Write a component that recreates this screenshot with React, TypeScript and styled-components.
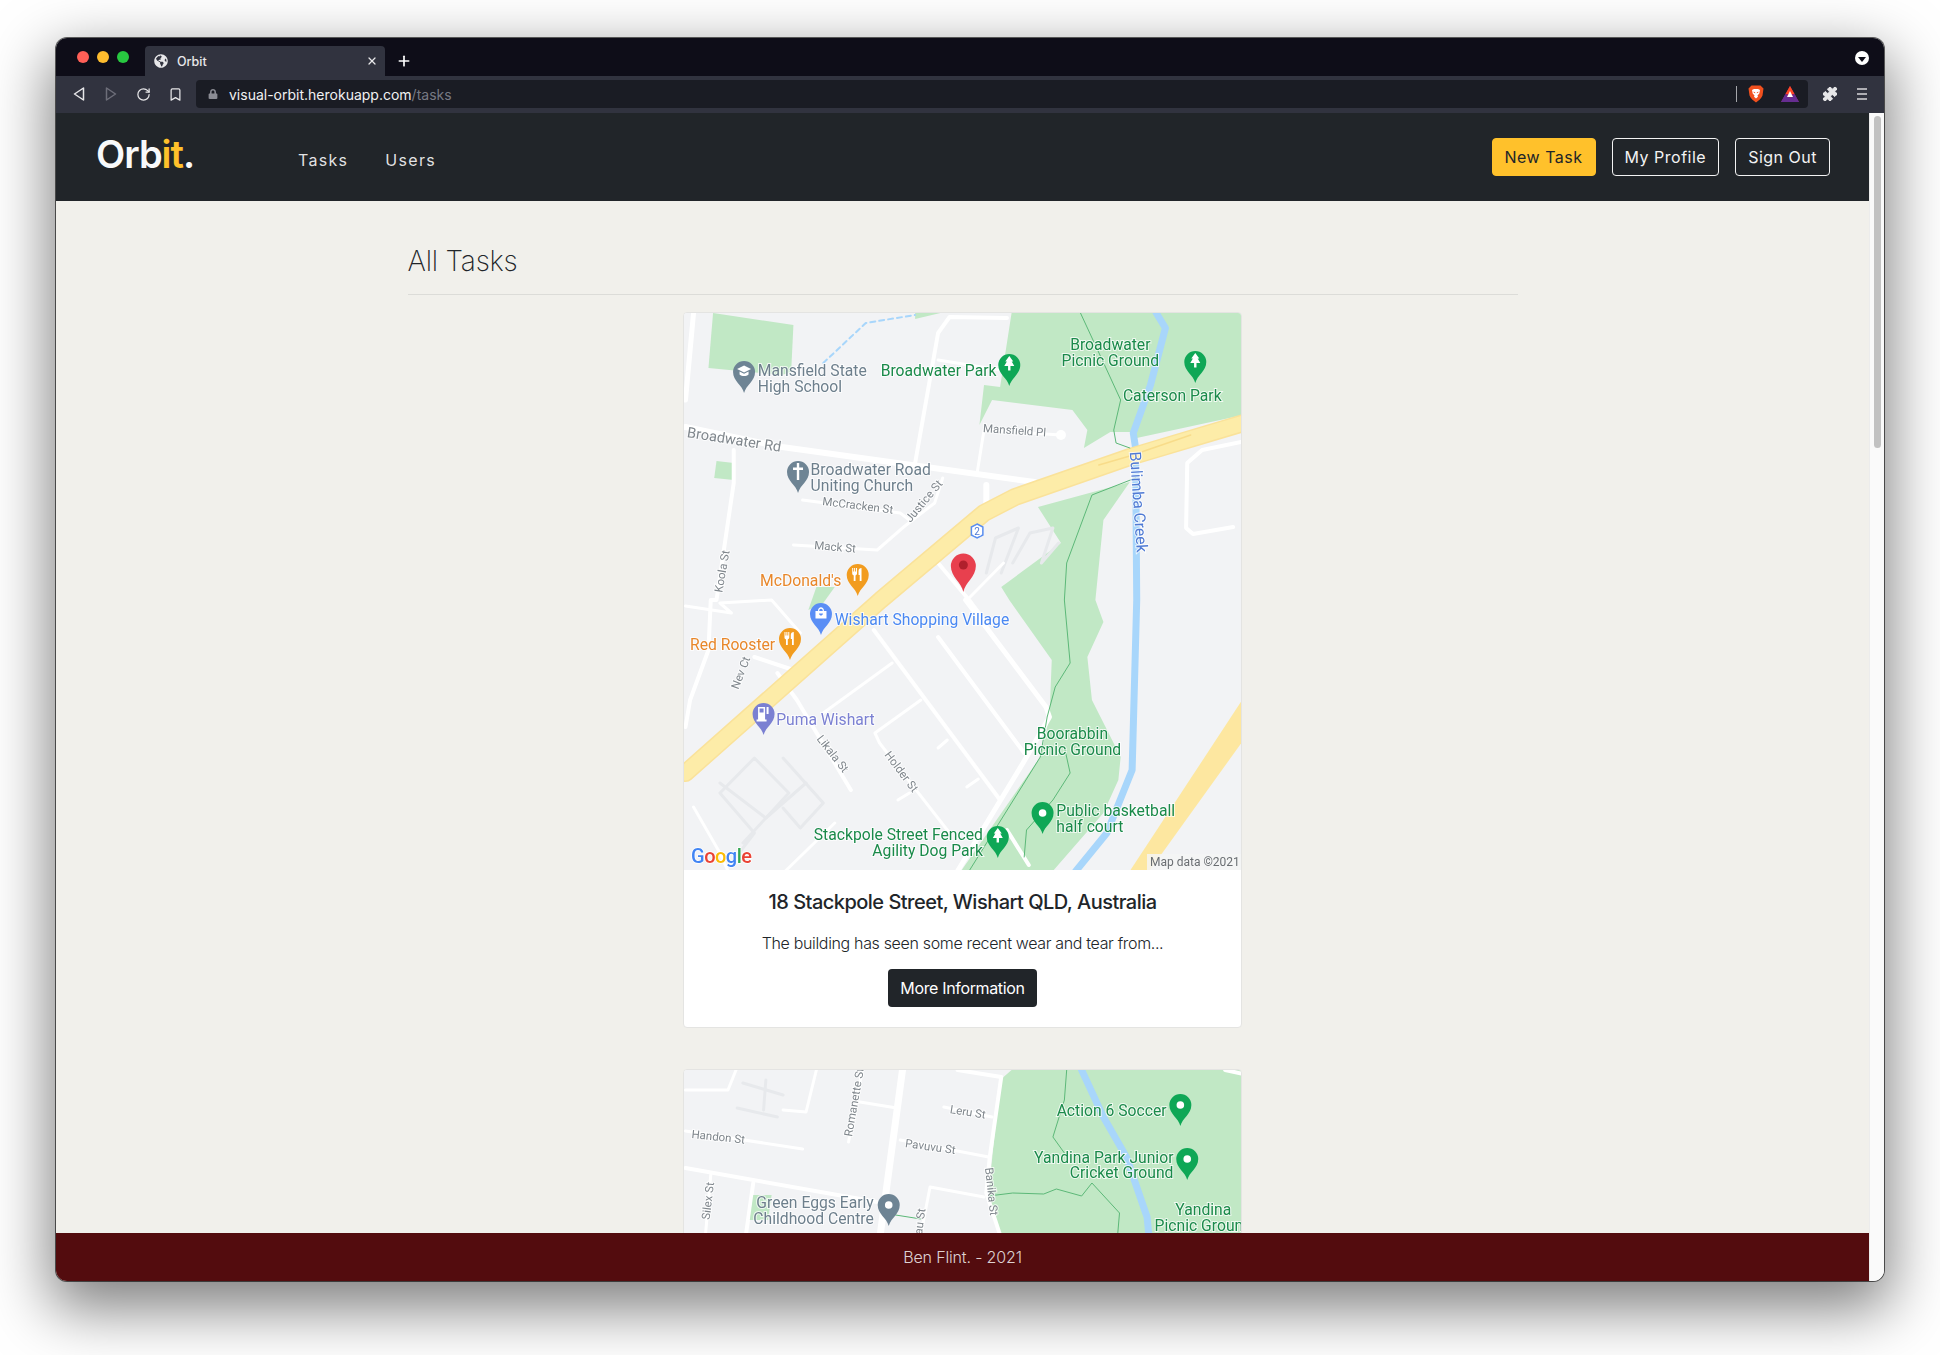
import React from "react";
import styled, { createGlobalStyle } from "styled-components";
import { FaGlobeAmericas, FaLock } from "react-icons/fa";
import { Bookmark, Plus, Puzzle, RotateCw, X } from "lucide-react";

const GlobalStyle = createGlobalStyle`
    html, body {
        margin: 0;
        background: #fff;
        font-family: Inter, "Liberation Sans", sans-serif;
    }
    * { box-sizing: border-box; }
`

const Page = styled.div`
    width: 1940px;
    height: 1355px;
    padding: 38px 56px 74px;
    overflow: hidden;
`

const BrowserWindow = styled.div`
    display: flex;
    flex-direction: column;
    height: 1243px;
    border-radius: 11px;
    overflow: hidden;
    box-shadow: 0 0 0 1px rgba(0,0,0,.6), 0 22px 60px 6px rgba(0,0,0,.5);
`

const TabStrip = styled.div`
    display: flex;
    align-items: flex-end;
    height: 38px;
    padding-left: 21px;
    background: #0e0d18;
`

const Lights = styled.div`
    display: flex;
    gap: 8px;
    align-self: flex-start;
    margin-top: 13px;
    width: 68px;
`

const Light = styled.span<{ $color: string }>`
    width: 12px;
    height: 12px;
    border-radius: 50%;
    background: ${p => p.$color};
`

const Tab = styled.div`
    display: flex;
    align-items: center;
    width: 240px;
    height: 30px;
    padding: 0 7px 0 9px;
    border-radius: 4px 4px 0 0;
    background: #31333f;
    color: #e8e8ea;
    font-size: 12.5px;
    font-weight: 500;
    svg:first-child { margin-right: 9px; }
    span { flex: 1; }
`

const NewTab = styled.div`
    display: flex;
    align-items: center;
    height: 30px;
    margin-left: 11px;
    color: #fff;
`

const DownBadge = styled.div`
    display: flex;
    align-items: center;
    justify-content: center;
    align-self: flex-start;
    width: 14px;
    height: 14px;
    margin: 13px 15px 0 auto;
    border-radius: 50%;
    background: #fff;
    &::after {
        content: "";
        margin-top: 2px;
        border-top: 5px solid #0e0d18;
        border-left: 4px solid transparent;
        border-right: 4px solid transparent;
    }
`

const Toolbar = styled.div`
    display: flex;
    align-items: center;
    height: 37px;
    padding: 0 6px 1px 7px;
    background: #31333f;
    color: #e6e6e8;
`

const ToolIcon = styled.div<{ $dim?: boolean }>`
    display: flex;
    align-items: center;
    justify-content: center;
    width: 32px;
    color: ${p => (p.$dim ? "#6d6e79" : "#e6e6e8")};
`

const AddressBar = styled.div`
    display: flex;
    align-items: center;
    flex: 1;
    height: 28px;
    margin: 0 6px 0 5px;
    padding: 0 9px 0 12px;
    border-radius: 4px;
    background: #1a1c24;
    font-size: 14px;
    color: #f1f1f2;
`

const Url = styled.span`
    margin-left: 11px;
    flex: 1;
    span { color: #777983; }
`

const Divider = styled.i`
    width: 1px;
    height: 16px;
    margin-right: 11px;
    background: #a5a6ab;
`

const AddressGap = styled.span`
    width: 17px;
`

const Viewport = styled.div`
    display: flex;
    flex: 1;
    min-height: 0;
`

const Column = styled.div`
    display: flex;
    flex-direction: column;
    flex: 1;
    min-width: 0;
`

const Scrollbar = styled.div`
    width: 15px;
    padding: 3px 3px 0 4px;
    background: #fafafa;
    border-left: 1px solid #ececec;
`

const ScrollThumb = styled.div`
    height: 332px;
    border-radius: 4px;
    background: #c2c2c2;
`

const Navbar = styled.nav`
    display: flex;
    align-items: center;
    height: 88px;
    padding: 0 39px 0 40px;
    background: #212529;
`

const Logo = styled.div`
    width: 202px;
    margin-top: -7px;
    color: #f8f9fa;
    font-size: 38px;
    font-weight: 600;
    letter-spacing: -1px;
    line-height: 1;
    span { color: #ffc12b; }
`

const NavLink = styled.a`
    margin-right: 37px;
    margin-top: 6px;
    color: rgba(255,255,255,.88);
    font-size: 16px;
    letter-spacing: 1.3px;
`

const NavActions = styled.div`
    display: flex;
    gap: 16px;
    margin-left: auto;
    margin-bottom: 1px;
`

const NavButton = styled.button<{ $primary?: boolean }>`
    height: 38px;
    padding: 0 12px;
    border: 1px solid ${p => (p.$primary ? "#ffc12b" : "#f3f3f3")};
    border-radius: 4px;
    background: ${p => (p.$primary ? "#ffc12b" : "transparent")};
    color: ${p => (p.$primary ? "#212529" : "#f3f3f3")};
    font-family: inherit;
    font-size: 16px;
    letter-spacing: .5px;
`

const Main = styled.main`
    flex: 1;
    min-height: 0;
    overflow: hidden;
    background: #f1f0eb;
`

const Container = styled.div`
    width: 1110px;
    margin: 0 auto;
    padding-top: 41px;
`

const PageTitle = styled.h2`
    margin: 0;
    padding-bottom: 14px;
    border-bottom: 1px solid #dcdcd8;
    color: #212529;
    font-size: 28px;
    font-weight: 200;
    line-height: 38px;
    letter-spacing: -.2px;
`

const Card = styled.article`
    width: 559px;
    margin: 17px auto 41px;
    border: 1px solid #e4e4e2;
    border-radius: 4px;
    background: #fff;
    overflow: hidden;
    text-align: center;
`

const MapSvg = styled.svg`
    display: block;
    width: 557px;
    height: 557px;
    filter: blur(.35px);
`

const CardBody = styled.div`
    padding: 20px;
`

const CardTitle = styled.h5`
    margin: 0 0 17px;
    color: #212529;
    font-size: 20px;
    font-weight: 500;
    line-height: 24px;
    letter-spacing: -.52px;
`

const CardText = styled.p`
    margin: 0 0 14px;
    color: #212529;
    font-size: 16px;
    font-weight: 300;
    line-height: 24px;
    letter-spacing: -.34px;
`

const MoreButton = styled.button`
    height: 38px;
    padding: 0 12px;
    border: 0;
    border-radius: 4px;
    background: #212529;
    color: #fff;
    font-family: inherit;
    font-size: 16px;
    letter-spacing: -.35px;
`

const Footer = styled.footer`
    display: flex;
    align-items: center;
    justify-content: center;
    height: 48px;
    background: #530c0e;
    color: rgba(255,255,255,.82);
    font-size: 16px;
    font-weight: 300;
    letter-spacing: -.15px;
`

const TONES: Record<string, string> = {
    green: "#1a8a4a",
    poi: "#6d7f8c",
    orange: "#e8872a",
    blue: "#4a88f2",
    purple: "#7b80d2",
    road: "#7f868c",
    water: "#4f7ad4",
}

const MapLabel = styled.text<{ $tone: string; $size?: number }>`
    fill: ${p => TONES[p.$tone]};
    font-family: Roboto, "Liberation Sans", sans-serif;
    font-size: ${p => p.$size || 15.7}px;
    stroke: #fff;
    stroke-width: 2px;
    stroke-opacity: .75;
    paint-order: stroke;
`

const AttributionText = styled.text`
    fill: #6a6e72;
    font-family: Roboto, "Liberation Sans", sans-serif;
    font-size: 12px;
`

const GoogleMark = styled.text`
    font-family: Roboto, "Liberation Sans", sans-serif;
    font-size: 20px;
    font-weight: 500;
    letter-spacing: -.5px;
    stroke: #fff;
    stroke-width: 1.5px;
    paint-order: stroke;
`

// map measurements were taken on a 486 wide grid, the image is 558 wide
const K = 558 / 486
const mx = (x: number) => x * K + 1.5

type Pt = [number, number]
type Label = { x: number; y: number; t: string; tone: string; anchor?: "start" | "middle" | "end"; rot?: number; size?: number }
type PinT = { x: number; y: number; color: string; kind: string }

const pts = (list: Pt[]) => list.map(([x, y]) => `${mx(x)},${y}`).join(" ")

const Poly = ({ list, color, w, dash }: { list: Pt[]; color: string; w: number; dash?: string }) => (
    <polyline points={pts(list)} fill="none" stroke={color} strokeWidth={w} strokeDasharray={dash} strokeLinejoin="round" strokeLinecap="round" />
)

const Area = ({ list, color = "#c1e8c5" }: { list: Pt[]; color?: string }) => <polygon points={pts(list)} fill={color} />

const PinGlyph = ({ kind }: { kind: string }) => {
    switch (kind) {
        case "tree":
            return <path d="M0 -30 L4 -24.5 H2.4 L5 -20 H1.2 V-15.5 H-1.2 V-20 H-5 L-2.4 -24.5 H-4 Z" fill="#fff" />
        case "school":
            return <path d="M-7 -24 L0 -27.5 L7 -24 L0 -20.5 Z M-4.5 -21.5 V-18.5 C-2 -16.5 2 -16.5 4.5 -18.5 V-21.5 L0 -19.2 Z" fill="#fff" />
        case "cross":
            return <path d="M-1.2 -30 H1.2 V-25.5 H5 V-23 H1.2 V-13 H-1.2 V-23 H-5 V-25.5 H-1.2 Z" fill="#fff" />
        case "fork":
            return <path d="M-5.5 -28 H-4.5 V-24.5 H-3.6 V-28 H-2.6 V-24.5 H-1.7 V-28 H-.7 V-22.5 C-.7 -21.5 -1.5 -21 -2.2 -20.6 V-15 H-4 V-20.6 C-4.8 -21 -5.5 -21.5 -5.5 -22.5 Z M2 -15 V-21 H.8 V-25 C.8 -27 2 -28 3.8 -28 V-15 Z" fill="#fff" />
        case "bag":
            return <path d="M-5.5 -24 H-3 C-3 -29 3 -29 3 -24 H5.5 V-16.5 H-5.5 Z M-1.8 -24 H1.8 C1.8 -27 -1.8 -27 -1.8 -24 Z M-2 -21.5 C-1.5 -18.8 1.5 -18.8 2 -21.5 Z" fill="#fff" fillRule="evenodd" />
        case "fuel":
            return <path d="M-5.5 -28 H1.5 V-15.5 H3 V-13.5 H-7 V-15.5 H-5.5 Z M-4 -26.5 V-22.5 H0 V-26.5 Z M3 -28 H5 V-21 H3 Z" fill="#fff" fillRule="evenodd" />
        default:
            return <circle cx="0" cy="-21" r="3.8" fill="#fff" />
    }
}

const Pin = ({ x, y, color, kind }: PinT) => (
    <g transform={`translate(${mx(x)} ${y})`}>
        <path d="M0 0 C-2 -8 -11 -12 -11 -21 A11 11 0 1 1 11 -21 C11 -12 2 -8 0 0 Z" fill={color} />
        <PinGlyph kind={kind} />
    </g>
)

const Labels = ({ list }: { list: Label[] }) => (
    <>
        {list.map((l, i) => {
            const x = mx(l.x) - (l.anchor ? 0 : 1.2)
            return (
                <MapLabel
                    key={i}
                    x={x}
                    y={l.y}
                    textAnchor={l.anchor || "start"}
                    $tone={l.tone}
                    $size={l.size}
                    transform={l.rot ? `rotate(${l.rot} ${x} ${l.y})` : undefined}
                >
                    {l.t}
                </MapLabel>
            )
        })}
    </>
)

const PIN_GREEN = "#0fa756"
const PIN_GREY = "#6e8494"

const WisharMap = () => (
    <MapSvg viewBox="0 0 557 557">
        <rect width="558" height="558" fill="#f2f3f5" />
        <Area list={[[24, 0], [94, 12], [92, 59], [84, 62], [20, 55]]} />
        <Area list={[[200, 0], [222, 0], [200, 6]]} />
        <Area list={[[284, 0], [274, 74], [260, 72], [256, 112], [267, 87], [337, 97], [350, 117], [347, 135], [370, 119], [387, 119], [393, 125], [486, 102], [486, 0]]} />
        <Area list={[[27, 148], [42, 150], [42, 167], [25, 165]]} />
        <Area list={[[114, 274], [130, 274], [120, 290], [107, 297]]} />
        <Area list={[[307, 194], [387, 169], [364, 207], [357, 287], [364, 309], [350, 344], [354, 387], [379, 444], [377, 467], [364, 500], [320, 558], [240, 558], [309, 444], [317, 404], [319, 347], [282, 287], [275, 274], [327, 230]]} />

        <Poly list={[[120, 50], [157, 10], [200, 2]]} color="#a8d6fb" w={2} dash="5 4" />

        {[
            [[40, 550], [60, 520], [30, 480], [60, 445], [90, 480], [50, 530]],
            [[85, 445], [120, 490], [100, 515], [85, 495]],
            [[30, 470], [70, 505], [105, 470]],
            [[262, 260], [270, 225], [290, 215], [275, 260]],
            [[285, 250], [300, 220], [320, 215], [310, 250], [325, 230]],
        ].map((l, i) => <Poly key={i} list={l as Pt[]} color="#e7e9ec" w={3} />)}

        <Poly list={[[7, 0], [0, 87]]} color="#fff" w={5} />
        <Poly list={[[0, 114], [84, 134], [304, 169]]} color="#fff" w={6} />
        <Poly list={[[200, 150], [220, 20], [230, 4], [280, 5]]} color="#fff" w={4} />
        <Poly list={[[220, 47], [274, 57]]} color="#fff" w={3} />
        <Poly list={[[254, 160], [260, 117], [327, 122]]} color="#fff" w={3} />
        <circle cx={mx(327)} cy="122" r="5" fill="#fff" />
        <Poly list={[[42, 137], [42, 170], [27, 287], [22, 287], [20, 337], [4, 387], [0, 414]]} color="#fff" w={4} />
        <Poly list={[[102, 187], [187, 200], [195, 207]]} color="#fff" w={3} />
        <Poly list={[[224, 165], [217, 190], [190, 214], [167, 237], [94, 232]]} color="#fff" w={3} />
        <Poly list={[[262, 172], [262, 195]]} color="#fff" w={6} />
        <Poly list={[[220, 250], [247, 287], [262, 310]]} color="#fff" w={4} />
        <Poly list={[[277, 250], [247, 285]]} color="#fff" w={3} />
        <Poly list={[[164, 317], [274, 487]]} color="#fff" w={4} />
        <Poly list={[[220, 324], [295, 440]]} color="#fff" w={4} />
        <Poly list={[[244, 287], [314, 394], [317, 404], [294, 450], [237, 558]]} color="#fff" w={5} />
        <Poly list={[[180, 350], [120, 400]]} color="#fff" w={3} />
        <Poly list={[[205, 387], [165, 420], [169, 430], [230, 520]]} color="#fff" w={3} />
        <Poly list={[[228, 427], [220, 435]]} color="#fff" w={3} />
        <Poly list={[[255, 466], [245, 474]]} color="#fff" w={3} />
        <Poly list={[[195, 480], [185, 487]]} color="#fff" w={3} />
        <Poly list={[[280, 517], [299, 552]]} color="#fff" w={4} />
        <Poly list={[[80, 360], [97, 387], [144, 477]]} color="#fff" w={4} />
        <Poly list={[[60, 344], [94, 357]]} color="#fff" w={4} />
        <Poly list={[[130, 510], [87, 558]]} color="#fff" w={3} />
        <Poly list={[[7, 494], [30, 540], [37, 558]]} color="#fff" w={3} />
        <Poly list={[[0, 293], [40, 300], [30, 290], [75, 287], [100, 320]]} color="#fff" w={3} />
        <Poly list={[[484, 129], [450, 137], [437, 150], [436, 215], [442, 221], [477, 214]]} color="#fff" w={4} />

        <Poly list={[[410, 0], [418, 15], [405, 72], [390, 120], [392, 135], [393, 287], [389, 457], [367, 520], [340, 558]]} color="#a8d6fb" w={7} />

        <Poly list={[[486, 110], [387, 144], [287, 184], [260, 200], [170, 287], [0, 460]]} color="#fae29a" w={18} />
        <Poly list={[[486, 110], [387, 144], [287, 184], [260, 200], [170, 287], [0, 460]]} color="#fdeca8" w={15} />
        <Poly list={[[440, 122], [387, 143], [360, 152]]} color="#f8dc8a" w={1.5} />
        <Area list={[[486, 385], [486, 427], [404, 558], [387, 558]]} color="#fde7a0" />

        <Poly list={[[344, 0], [367, 57], [379, 87], [373, 117], [375, 130], [387, 135]]} color="#5cb878" w={1} />
        <Poly list={[[392, 165], [354, 182], [332, 250], [330, 287], [335, 350], [322, 374], [315, 404], [309, 444], [247, 558]]} color="#5cb878" w={1} />
        <Poly list={[[330, 434], [335, 460], [320, 487], [297, 517], [295, 544]]} color="#5cb878" w={1} />

        <polygon points={`${mx(254)},211 ${mx(259)},214 ${mx(259)},222 ${mx(254)},225 ${mx(249)},222 ${mx(249)},214`} fill="#fff" stroke="#5a8ef0" strokeWidth="1.5" />
        <MapLabel x={mx(254)} y={222} textAnchor="middle" $tone="water" $size={10}>2</MapLabel>

        <Labels list={[
            { x: 64, y: 63, t: "Mansfield State", tone: "poi" },
            { x: 64, y: 79, t: "High School", tone: "poi" },
            { x: 171, y: 63, t: "Broadwater Park", tone: "green" },
            { x: 370, y: 37, t: "Broadwater", tone: "green", anchor: "middle" },
            { x: 370, y: 53, t: "Picnic Ground", tone: "green", anchor: "middle" },
            { x: 382, y: 88, t: "Caterson Park", tone: "green" },
            { x: 260, y: 119, t: "Mansfield Pl", tone: "road", size: 11.5, rot: 4 },
            { x: 2, y: 124, t: "Broadwater Rd", tone: "road", size: 14.5, rot: 9 },
            { x: 110, y: 162, t: "Broadwater Road", tone: "poi" },
            { x: 110, y: 178, t: "Uniting Church", tone: "poi" },
            { x: 120, y: 192, t: "McCracken St", tone: "road", size: 11.5, rot: 7 },
            { x: 197, y: 210, t: "Justice St", tone: "road", size: 11.5, rot: -50 },
            { x: 113, y: 236, t: "Mack St", tone: "road", size: 11.5, rot: 5 },
            { x: 33, y: 280, t: "Koola St", tone: "road", size: 11.5, rot: -80 },
            { x: 388, y: 139, t: "Bulimba Creek", tone: "water", rot: 86 },
            { x: 66, y: 273, t: "McDonald's", tone: "orange" },
            { x: 131, y: 312, t: "Wishart Shopping Village", tone: "blue" },
            { x: 5, y: 337, t: "Red Rooster", tone: "orange" },
            { x: 80, y: 412, t: "Puma Wishart", tone: "purple" },
            { x: 47, y: 377, t: "Nev Ct", tone: "road", size: 11.5, rot: -69 },
            { x: 115, y: 426, t: "Likala St", tone: "road", size: 11.5, rot: 52 },
            { x: 174, y: 442, t: "Holder St", tone: "road", size: 11.5, rot: 53 },
            { x: 337, y: 426, t: "Boorabbin", tone: "green", anchor: "middle" },
            { x: 337, y: 442, t: "Picnic Ground", tone: "green", anchor: "middle" },
            { x: 324, y: 503, t: "Public basketball", tone: "green" },
            { x: 324, y: 519, t: "half court", tone: "green" },
            { x: 259, y: 527, t: "Stackpole Street Fenced", tone: "green", anchor: "end" },
            { x: 259, y: 543, t: "Agility Dog Park", tone: "green", anchor: "end" },
        ]} />

        <Pin x={51} y={80} color={PIN_GREY} kind="school" />
        <Pin x={282} y={73} color={PIN_GREEN} kind="tree" />
        <Pin x={444} y={70} color={PIN_GREEN} kind="tree" />
        <Pin x={98} y={180} color={PIN_GREY} kind="cross" />
        <Pin x={150} y={283} color="#f29c1f" kind="fork" />
        <Pin x={118} y={322} color="#5a8ef5" kind="bag" />
        <Pin x={91} y={347} color="#f29c1f" kind="fork" />
        <Pin x={68} y={422} color="#7b80d2" kind="fuel" />
        <Pin x={311} y={521} color={PIN_GREEN} kind="dot" />
        <Pin x={272} y={545} color={PIN_GREEN} kind="tree" />

        <g transform={`translate(${mx(242)} 279)`}>
            <path d="M0 0 C-2 -10 -12.5 -15 -12.5 -26 A12.5 12.5 0 1 1 12.5 -26 C12.5 -15 2 -10 0 0 Z" fill="#e8404e" />
            <circle cx="0" cy="-27" r="4.5" fill="#b0202c" />
        </g>

        <GoogleMark x={7} y={550}>
            <tspan fill="#4285f4">G</tspan>
            <tspan fill="#ea4335">o</tspan>
            <tspan fill="#fbbc05">o</tspan>
            <tspan fill="#4285f4">g</tspan>
            <tspan fill="#34a853">l</tspan>
            <tspan fill="#ea4335">e</tspan>
        </GoogleMark>
        <rect x={463} y={541} width={94} height={16} fill="#f5f5f5" opacity=".85" />
        <AttributionText x={466} y={553}>Map data ©2021</AttributionText>
    </MapSvg>
)

const YandinaMap = () => (
    <MapSvg viewBox="0 0 557 557">
        <rect width="558" height="558" fill="#f2f3f5" />
        <Area list={[[284, 0], [274, 10], [264, 123], [274, 170], [486, 170], [486, 0]]} />
        <Poly list={[[237, 0], [275, 7], [265, 87], [262, 123], [274, 165]]} color="#fff" w={4} />
        <Poly list={[[470, 0], [486, 4]]} color="#fff" w={4} />
        <Poly list={[[189, 0], [169, 170]]} color="#fff" w={7} />
        <Poly list={[[0, 98], [172, 133]]} color="#fff" w={4} />
        <Poly list={[[59, 113], [52, 170]]} color="#fff" w={4} />
        <Poly list={[[22, 105], [17, 170]]} color="#fff" w={3} />
        <Poly list={[[187, 70], [264, 87]]} color="#fff" w={3} />
        <Poly list={[[152, 32], [184, 38]]} color="#fff" w={3} />
        <Poly list={[[225, 37], [267, 47]]} color="#fff" w={3} />
        <Poly list={[[204, 170], [213, 117], [260, 127]]} color="#fff" w={3} />
        <Poly list={[[0, 61], [102, 79]]} color="#fff" w={3} />
        <Poly list={[[154, 0], [142, 72]]} color="#fff" w={3} />
        <Poly list={[[0, 20], [37, 20], [44, 0]]} color="#fff" w={3} />
        <Poly list={[[114, 0], [105, 42], [85, 40]]} color="#fff" w={3} />
        <Poly list={[[50, 13], [85, 25]]} color="#e7e9ec" w={3} />
        <Poly list={[[45, 38], [80, 47]]} color="#e7e9ec" w={3} />
        <Poly list={[[70, 10], [68, 40]]} color="#e7e9ec" w={3} />
        <Poly list={[[345, 0], [364, 47], [384, 87], [402, 147], [404, 170]]} color="#a8d6fb" w={7} />
        <Poly list={[[332, 0], [330, 30], [320, 67], [330, 83]]} color="#5cb878" w={1} />
        <Poly list={[[264, 126], [285, 123], [312, 124], [323, 119], [345, 126], [354, 113], [378, 143], [376, 170]]} color="#5cb878" w={1} />
        <Poly list={[[183, 145], [205, 149]]} color="#5cb878" w={1} />
        <Area list={[[59, 125], [75, 125], [72, 150], [56, 150]]} />
        <Labels list={[
            { x: 231, y: 43, t: "Leru St", tone: "road", size: 11.5, rot: 9 },
            { x: 192, y: 77, t: "Pavuvu St", tone: "road", size: 11.5, rot: 8 },
            { x: 6, y: 68, t: "Handon St", tone: "road", size: 11.5, rot: 6 },
            { x: 146, y: 67, t: "Romanette St", tone: "road", size: 11.5, rot: -80 },
            { x: 22, y: 150, t: "Silex St", tone: "road", size: 11.5, rot: -83 },
            { x: 262, y: 98, t: "Banika St", tone: "road", size: 11.5, rot: 84 },
            { x: 206, y: 173, t: "Nau St", tone: "road", size: 11.5, rot: -82 },
            { x: 164, y: 138, t: "Green Eggs Early", tone: "poi", anchor: "end" },
            { x: 164, y: 154, t: "Childhood Centre", tone: "poi", anchor: "end" },
            { x: 419, y: 46, t: "Action 6 Soccer", tone: "green", anchor: "end" },
            { x: 425, y: 93, t: "Yandina Park Junior", tone: "green", anchor: "end" },
            { x: 425, y: 108, t: "Cricket Ground", tone: "green", anchor: "end" },
            { x: 451, y: 145, t: "Yandina", tone: "green", anchor: "middle" },
            { x: 451, y: 161, t: "Picnic Ground", tone: "green", anchor: "middle" },
        ]} />
        <Pin x={177} y={156} color={PIN_GREY} kind="dot" />
        <Pin x={431} y={56} color={PIN_GREEN} kind="dot" />
        <Pin x={437} y={110} color={PIN_GREEN} kind="dot" />
    </MapSvg>
)

const BackIcon = ({ flip }: { flip?: boolean }) => (
    <svg width="12" height="14" viewBox="0 0 12 14" style={flip ? { transform: "scaleX(-1)" } : undefined}>
        <path d="M10.5 1 V13 L1.5 7 Z" fill="none" stroke="currentColor" strokeWidth="1.5" strokeLinejoin="round" />
    </svg>
)

const BraveIcon = () => (
    <svg width="16" height="18" viewBox="0 0 16 18">
        <path d="M3.5 0.5 H12.5 L15.5 3.5 L14.5 10.5 C13.5 13.5 10.5 15.5 8 17.5 C5.5 15.5 2.5 13.5 1.5 10.5 L0.5 3.5 Z" fill="#f1501e" />
        <path d="M4 5 L6 4 H10 L12 5 L11.3 8.5 L9.5 10.5 L10 11.8 L8 13.5 L6 11.8 L6.5 10.5 L4.7 8.5 Z" fill="#fff" />
        <path d="M5.6 6.6 L7.2 7.4 L7.2 8.2 L5.8 7.8 Z M10.4 6.6 L8.8 7.4 L8.8 8.2 L10.2 7.8 Z" fill="#f1501e" />
    </svg>
)

const BatIcon = () => (
    <svg width="18" height="16" viewBox="0 0 18 16">
        <path d="M9 0 L18 16 H0 Z" fill="#9e1f63" />
        <path d="M9 0 L13.5 8 H4.5 Z" fill="#ff4724" />
        <path d="M4.5 8 L9 12 L13.5 8 L18 16 H0 Z" fill="#662d91" />
        <path d="M9 5 L12 11 H6 Z" fill="#fff" />
    </svg>
)

const MenuIcon = () => (
    <svg width="10" height="12" viewBox="0 0 10 12">
        <path d="M0 1 H10 M0 6 H10 M0 11 H10" stroke="#d8d8da" strokeWidth="1.5" />
    </svg>
)

const App: React.FC = () => {
    return (
        <Page>
            <GlobalStyle />
            <BrowserWindow>
                <TabStrip>
                    <Lights>
                        <Light $color="#ff5f57" />
                        <Light $color="#febc2e" />
                        <Light $color="#28c840" />
                    </Lights>
                    <Tab>
                        <FaGlobeAmericas size={14} />
                        <span>Orbit</span>
                        <X size={12} strokeWidth={2.5} />
                    </Tab>
                    <NewTab><Plus size={16} strokeWidth={2.5} /></NewTab>
                    <DownBadge />
                </TabStrip>
                <Toolbar>
                    <ToolIcon><BackIcon /></ToolIcon>
                    <ToolIcon $dim><BackIcon flip /></ToolIcon>
                    <ToolIcon><RotateCw size={15} strokeWidth={2} /></ToolIcon>
                    <ToolIcon><Bookmark size={15} strokeWidth={2} /></ToolIcon>
                    <AddressBar>
                        <FaLock size={10} color="#8b8c94" />
                        <Url>visual-orbit.herokuapp.com<span>/tasks</span></Url>
                        <Divider />
                        <BraveIcon />
                        <AddressGap />
                        <BatIcon />
                    </AddressBar>
                    <ToolIcon><Puzzle size={16} fill="currentColor" strokeWidth={1.5} /></ToolIcon>
                    <ToolIcon><MenuIcon /></ToolIcon>
                </Toolbar>
                <Viewport>
                    <Column>
                        <Navbar>
                            <Logo>Orb<span>it</span>.</Logo>
                            <NavLink>Tasks</NavLink>
                            <NavLink>Users</NavLink>
                            <NavActions>
                                <NavButton $primary>New Task</NavButton>
                                <NavButton>My Profile</NavButton>
                                <NavButton>Sign Out</NavButton>
                            </NavActions>
                        </Navbar>
                        <Main>
                            <Container>
                                <PageTitle>All Tasks</PageTitle>
                                <Card>
                                    <WisharMap />
                                    <CardBody>
                                        <CardTitle>18 Stackpole Street, Wishart QLD, Australia</CardTitle>
                                        <CardText>The building has seen some recent wear and tear from...</CardText>
                                        <MoreButton>More Information</MoreButton>
                                    </CardBody>
                                </Card>
                                <Card>
                                    <YandinaMap />
                                </Card>
                            </Container>
                        </Main>
                        <Footer>Ben Flint. - 2021</Footer>
                    </Column>
                    <Scrollbar><ScrollThumb /></Scrollbar>
                </Viewport>
            </BrowserWindow>
        </Page>
    )
}

export default App
